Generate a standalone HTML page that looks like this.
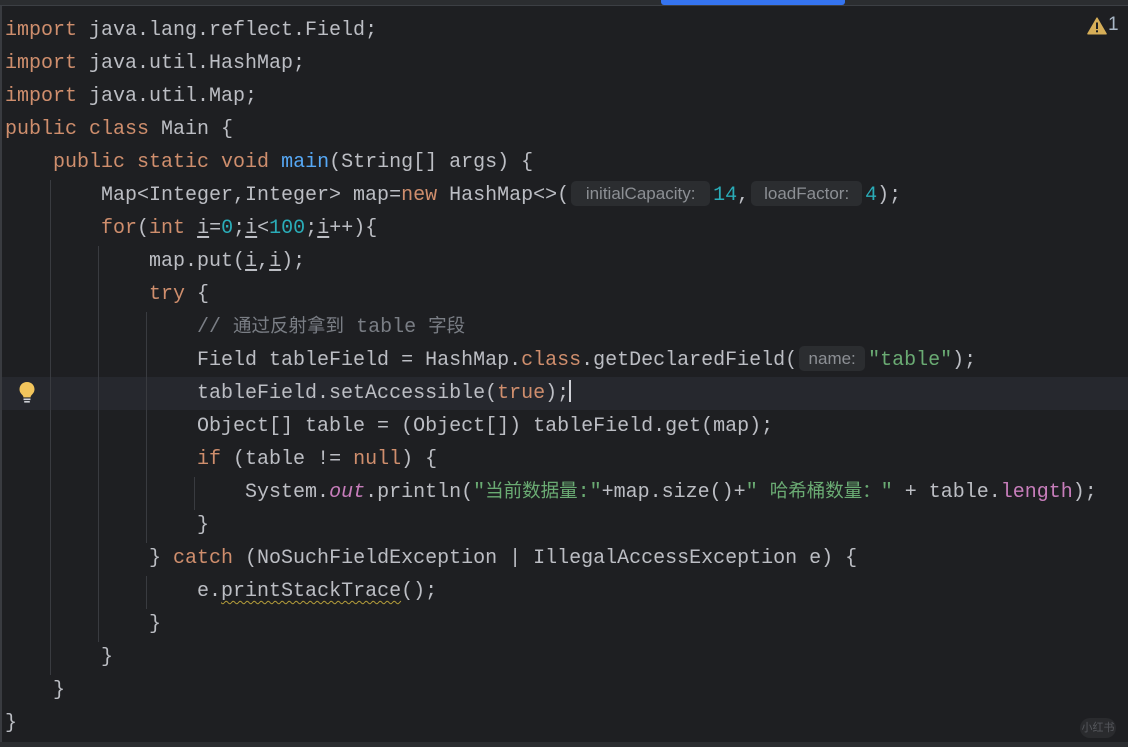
<!DOCTYPE html>
<html><head><meta charset="utf-8">
<style>
html,body{margin:0;padding:0;}
body{width:1128px;height:747px;background:#1e1f22;position:relative;overflow:hidden;font-family:"Liberation Mono","Noto Sans CJK SC",monospace;font-size:20px;color:#bcbec4;}
.top{position:absolute;left:0;top:0;width:1128px;height:5px;background:#2b2d30;}
.top2{position:absolute;left:0;top:5px;width:1128px;height:1px;background:#3c3f44;}
.blue{position:absolute;left:661px;top:0;width:184px;height:5px;background:#3574f0;border-radius:0 0 3px 3px;}
.lb{position:absolute;left:0;top:6px;width:2px;height:740px;background:#393b40;}
.bot{position:absolute;left:0;top:742px;width:1128px;height:5px;background:#2b2d30;}
.cur{position:absolute;left:2px;top:377px;width:1126px;height:33px;background:#26282e;}
.g{position:absolute;width:1px;background:#393b40;}
.l{position:absolute;left:5px;height:33px;line-height:33px;white-space:pre;}
.k{color:#cf8e6d}.n{color:#2aacb8}.s{color:#6aab73}.m{color:#56a8f5}.c{color:#7a7e85}.f{color:#c77dbb;font-style:italic}.p{color:#c77dbb}
.z{font-size:18.5px}
.u{text-decoration:underline;text-underline-offset:3px}
.h{display:inline-block;vertical-align:middle;height:25px;line-height:25px;background:#2b2d30;border-radius:5px;color:#8c8f94;font-family:"Liberation Sans",sans-serif;font-size:17px;text-align:center;margin:-3px 3px 0 2px;}
.w{text-decoration:underline wavy #b59d3a;text-underline-offset:4px;text-decoration-thickness:1px}
</style></head><body>
<div class="top"></div><div class="top2"></div><div class="blue"></div><div class="lb"></div><div class="bot"></div>
<div class="cur"></div>
<div class="g" style="left:50px;top:180px;height:495px"></div>
<div class="g" style="left:98px;top:246px;height:396px"></div>
<div class="g" style="left:146px;top:312px;height:231px"></div>
<div class="g" style="left:146px;top:576px;height:33px"></div>
<div class="g" style="left:194px;top:477px;height:33px"></div>

<div class="l" style="top:14px"><span class="k">import</span> java.lang.reflect.Field;</div>
<div class="l" style="top:47px"><span class="k">import</span> java.util.HashMap;</div>
<div class="l" style="top:80px"><span class="k">import</span> java.util.Map;</div>
<div class="l" style="top:113px"><span class="k">public class</span> Main {</div>
<div class="l" style="top:146px">    <span class="k">public static void</span> <span class="m">main</span>(String[] args) {</div>
<div class="l" style="top:179px">        Map&lt;Integer,Integer&gt; map=<span class="k">new</span> HashMap&lt;&gt;(<span class="h" style="width:139px">initialCapacity:</span><span class="n">14</span>,<span class="h" style="width:111px">loadFactor:</span><span class="n">4</span>);</div>
<div class="l" style="top:212px">        <span class="k">for</span>(<span class="k">int</span> <span class="u">i</span>=<span class="n">0</span>;<span class="u">i</span>&lt;<span class="n">100</span>;<span class="u">i</span>++){</div>
<div class="l" style="top:245px">            map.put(<span class="u">i</span>,<span class="u">i</span>);</div>
<div class="l" style="top:278px">            <span class="k">try</span> {</div>
<div class="l c" style="top:311px">                // <span class="z">通过反射拿到</span> table <span class="z">字段</span></div>
<div class="l" style="top:344px">                Field tableField = HashMap.<span class="k">class</span>.getDeclaredField(<span class="h" style="width:66px">name:</span><span class="s">"table"</span>);</div>
<div class="l" style="top:377px">                tableField.setAccessible(<span class="k">true</span>);<span style="display:inline-block;width:2px;height:22px;background:#ced0d6;vertical-align:middle;margin-top:-3px"></span></div>
<div class="l" style="top:410px">                Object[] table = (Object[]) tableField.get(map);</div>
<div class="l" style="top:443px">                <span class="k">if</span> (table != <span class="k">null</span>) {</div>
<div class="l" style="top:476px">                    System.<span class="f">out</span>.println(<span class="s">"<span class="z">当前数据量</span>:"</span>+map.size()+<span class="s">" <span class="z">哈希桶数量：</span>"</span> + table.<span class="p">length</span>);</div>
<div class="l" style="top:509px">                }</div>
<div class="l" style="top:542px">            } <span class="k">catch</span> (NoSuchFieldException | IllegalAccessException e) {</div>
<div class="l" style="top:575px">                e.<span class="w">printStackTrace</span>();</div>
<div class="l" style="top:608px">            }</div>
<div class="l" style="top:641px">        }</div>
<div class="l" style="top:674px">    }</div>
<div class="l" style="top:707px">}</div>

<svg style="position:absolute;left:17px;top:381px" width="20" height="24" viewBox="0 0 20 24">
<path d="M10 1C5.5 1 2.5 4.3 2.5 8.3c0 2.6 1.4 4.3 2.6 5.5.8.8 1.3 1.6 1.3 2.6h7.2c0-1 .5-1.8 1.3-2.6 1.2-1.2 2.6-2.9 2.6-5.5C17.5 4.3 14.5 1 10 1z" fill="#f2c55c"/>
<rect x="6.5" y="17.5" width="7" height="1.6" fill="#ced0d6"/><rect x="7.2" y="20" width="5.6" height="1.6" fill="#ced0d6"/></svg>

<svg style="position:absolute;left:1087px;top:17px" width="20" height="18" viewBox="0 0 20 18">
<path d="M10 1.2L19 16.8H1z" fill="#d6ae58" stroke="#d6ae58" stroke-width="1.5" stroke-linejoin="round"/>
<rect x="9" y="5.5" width="2" height="6.5" fill="#1e1f22"/><rect x="9" y="13.3" width="2" height="2" fill="#1e1f22"/></svg>
<div style="position:absolute;left:1108px;top:14px;font-family:'Liberation Sans',sans-serif;font-size:19px;color:#a9b7c6;">1</div>
<div style="position:absolute;left:1080px;top:718px;width:36px;height:20px;border-radius:10px;background:#2a2b2e;color:#55575c;font-size:11px;line-height:20px;text-align:center;font-family:'Liberation Sans','Noto Sans CJK SC',sans-serif;">小红书</div>
</body></html>
